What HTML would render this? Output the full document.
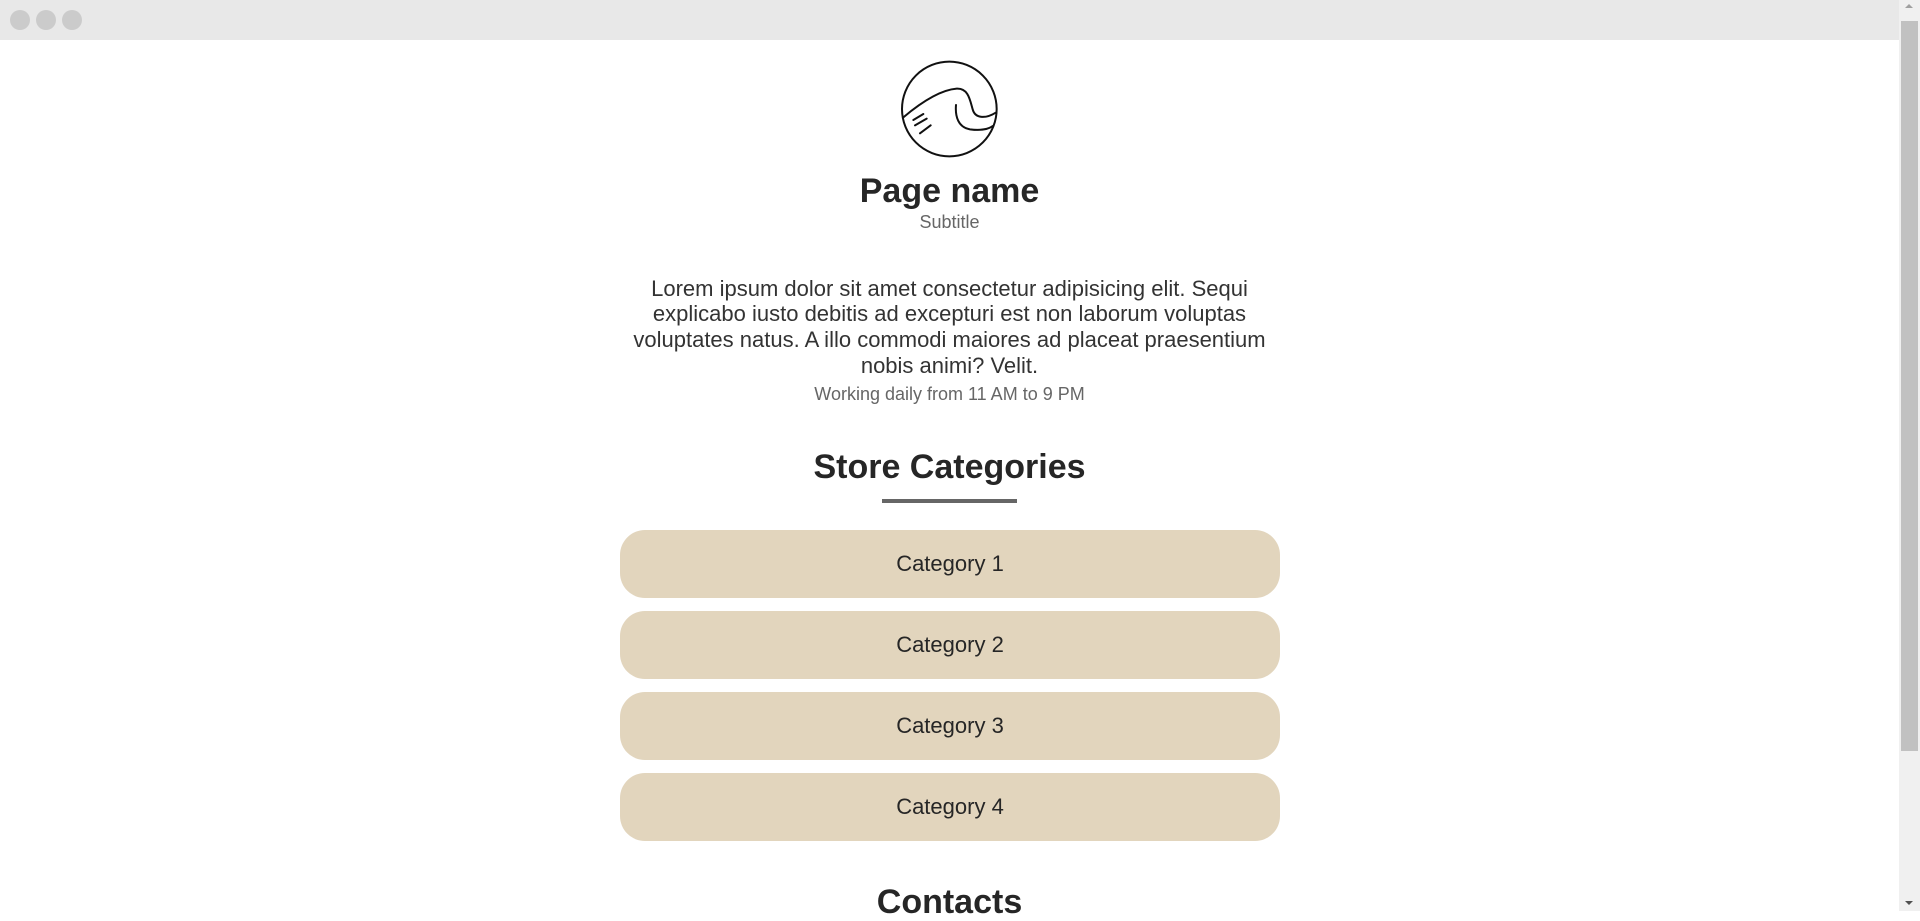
<!DOCTYPE html>
<html><head><meta charset="utf-8"><style>
html,body{margin:0;padding:0;width:1920px;height:911px;overflow:hidden;background:#fff;font-family:"Liberation Sans",Arial,sans-serif;}
.bar{position:absolute;left:0;top:0;width:1920px;height:40px;background:#e8e8e8;}
.dot{position:absolute;top:10px;width:20px;height:20px;border-radius:50%;background:#cbcbcb;}
.sb{position:absolute;left:1899px;top:0;width:21px;height:911px;background:#f0f0f0;}
.thumb{position:absolute;left:1901px;top:21px;width:17px;height:730px;background:#c1c1c1;}
.t{position:absolute;left:0;width:1899px;text-align:center;line-height:1;white-space:nowrap;}
.h{font-weight:bold;font-size:34px;color:#262626;}
.btn{position:absolute;left:620px;width:660px;height:68px;border-radius:25px;background:#e2d5bd;display:flex;align-items:center;justify-content:center;font-size:22px;color:#262626;}
</style></head><body>
<div class="bar"></div>
<div class="dot" style="left:10px"></div><div class="dot" style="left:36px"></div><div class="dot" style="left:62px"></div>
<div class="sb"></div>
<div class="thumb"></div>
<svg style="position:absolute;left:1903px;top:3px" width="12" height="6"><path d="M2 5 L6 1 L10 5Z" fill="#a0a0a0"/></svg>
<svg style="position:absolute;left:1903px;top:900px" width="12" height="6"><path d="M2 1 L6 5 L10 1Z" fill="#505050"/></svg>
<svg style="position:absolute;left:860px;top:40px" width="200" height="200" viewBox="0 0 600 600" fill="none" stroke="#111" stroke-width="6" stroke-linecap="round">
<circle cx="268" cy="207" r="142"/>
<path d="M130 232 C180 190 240 150 290 146 C325 144 330 180 338 208 C346 238 380 235 407 218"/>
<path d="M288 195 C285 230 295 262 330 268 C360 272 385 268 398 258"/>
<path d="M160 240 L190 222 M165 256 L200 236 M180 280 L212 256"/>
</svg>
<div class="t h" style="top:174px">Page name</div>
<div class="t" style="top:213px;font-size:18px;color:#666">Subtitle</div>
<div class="t" style="top:275.5px;font-size:22px;line-height:25.7px;color:#333">Lorem ipsum dolor sit amet consectetur adipisicing elit. Sequi<br>explicabo iusto debitis ad excepturi est non laborum voluptas<br>voluptates natus. A illo commodi maiores ad placeat praesentium<br>nobis animi? Velit.</div>
<div class="t" style="top:385px;font-size:18px;color:#666">Working daily from 11 AM to 9 PM</div>
<div class="t h" style="top:450px">Store Categories</div>
<div style="position:absolute;left:882px;top:499px;width:135px;height:4px;background:#666"></div>
<div class="btn" style="top:530px">Category 1</div>
<div class="btn" style="top:611px">Category 2</div>
<div class="btn" style="top:692px">Category 3</div>
<div class="btn" style="top:773px">Category 4</div>
<div class="t h" style="top:885px">Contacts</div>
</body></html>
